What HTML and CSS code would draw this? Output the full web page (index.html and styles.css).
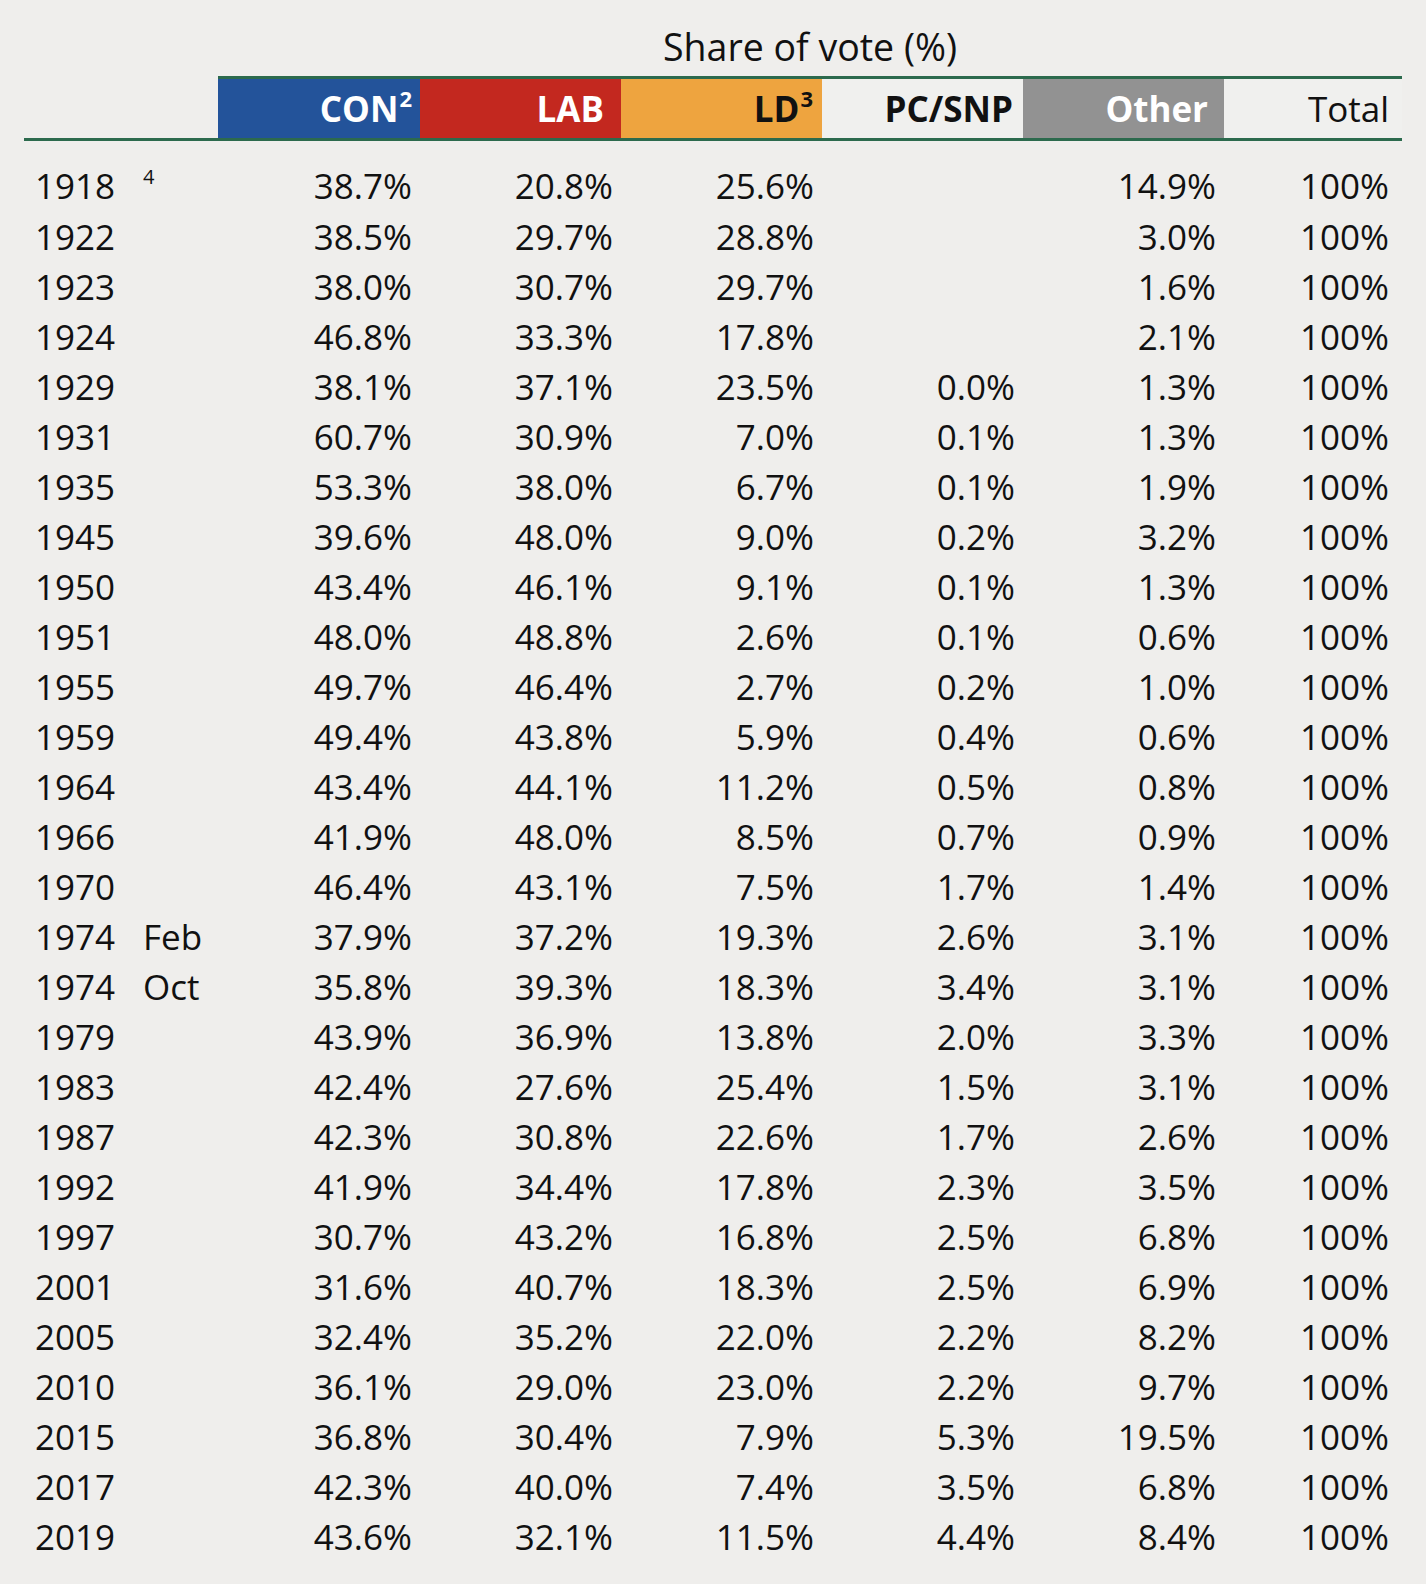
FILE: index.html
```html
<!DOCTYPE html>
<html lang="en">
<head>
<meta charset="utf-8">
<title>Share of vote</title>
<link rel="stylesheet" href="styles.css">
</head>
<body>
<div class="table">
  <div class="title-row">
    <div class="title">Share of vote (%)</div>
  </div>
  <div class="topline"></div>
  <div class="head">
    <div class="hcell blank"></div>
    <div class="hcell con">CON<sup>2</sup></div>
    <div class="hcell lab">LAB</div>
    <div class="hcell ld">LD<sup>3</sup></div>
    <div class="hcell pc">PC/SNP</div>
    <div class="hcell oth">Other</div>
    <div class="hcell tot">Total</div>
  </div>
  <div class="body">
    <div class="row first"><div class="yr"><span class="year">1918</span><span class="note">4</span></div><div class="num">38.7%</div><div class="num">20.8%</div><div class="num">25.6%</div><div class="num"></div><div class="num">14.9%</div><div class="num tnum">100%</div></div>
    <div class="row"><div class="yr"><span class="year">1922</span></div><div class="num">38.5%</div><div class="num">29.7%</div><div class="num">28.8%</div><div class="num"></div><div class="num">3.0%</div><div class="num tnum">100%</div></div>
    <div class="row"><div class="yr"><span class="year">1923</span></div><div class="num">38.0%</div><div class="num">30.7%</div><div class="num">29.7%</div><div class="num"></div><div class="num">1.6%</div><div class="num tnum">100%</div></div>
    <div class="row"><div class="yr"><span class="year">1924</span></div><div class="num">46.8%</div><div class="num">33.3%</div><div class="num">17.8%</div><div class="num"></div><div class="num">2.1%</div><div class="num tnum">100%</div></div>
    <div class="row"><div class="yr"><span class="year">1929</span></div><div class="num">38.1%</div><div class="num">37.1%</div><div class="num">23.5%</div><div class="num">0.0%</div><div class="num">1.3%</div><div class="num tnum">100%</div></div>
    <div class="row"><div class="yr"><span class="year">1931</span></div><div class="num">60.7%</div><div class="num">30.9%</div><div class="num">7.0%</div><div class="num">0.1%</div><div class="num">1.3%</div><div class="num tnum">100%</div></div>
    <div class="row"><div class="yr"><span class="year">1935</span></div><div class="num">53.3%</div><div class="num">38.0%</div><div class="num">6.7%</div><div class="num">0.1%</div><div class="num">1.9%</div><div class="num tnum">100%</div></div>
    <div class="row"><div class="yr"><span class="year">1945</span></div><div class="num">39.6%</div><div class="num">48.0%</div><div class="num">9.0%</div><div class="num">0.2%</div><div class="num">3.2%</div><div class="num tnum">100%</div></div>
    <div class="row"><div class="yr"><span class="year">1950</span></div><div class="num">43.4%</div><div class="num">46.1%</div><div class="num">9.1%</div><div class="num">0.1%</div><div class="num">1.3%</div><div class="num tnum">100%</div></div>
    <div class="row"><div class="yr"><span class="year">1951</span></div><div class="num">48.0%</div><div class="num">48.8%</div><div class="num">2.6%</div><div class="num">0.1%</div><div class="num">0.6%</div><div class="num tnum">100%</div></div>
    <div class="row"><div class="yr"><span class="year">1955</span></div><div class="num">49.7%</div><div class="num">46.4%</div><div class="num">2.7%</div><div class="num">0.2%</div><div class="num">1.0%</div><div class="num tnum">100%</div></div>
    <div class="row"><div class="yr"><span class="year">1959</span></div><div class="num">49.4%</div><div class="num">43.8%</div><div class="num">5.9%</div><div class="num">0.4%</div><div class="num">0.6%</div><div class="num tnum">100%</div></div>
    <div class="row"><div class="yr"><span class="year">1964</span></div><div class="num">43.4%</div><div class="num">44.1%</div><div class="num">11.2%</div><div class="num">0.5%</div><div class="num">0.8%</div><div class="num tnum">100%</div></div>
    <div class="row"><div class="yr"><span class="year">1966</span></div><div class="num">41.9%</div><div class="num">48.0%</div><div class="num">8.5%</div><div class="num">0.7%</div><div class="num">0.9%</div><div class="num tnum">100%</div></div>
    <div class="row"><div class="yr"><span class="year">1970</span></div><div class="num">46.4%</div><div class="num">43.1%</div><div class="num">7.5%</div><div class="num">1.7%</div><div class="num">1.4%</div><div class="num tnum">100%</div></div>
    <div class="row"><div class="yr"><span class="year">1974</span><span class="month">Feb</span></div><div class="num">37.9%</div><div class="num">37.2%</div><div class="num">19.3%</div><div class="num">2.6%</div><div class="num">3.1%</div><div class="num tnum">100%</div></div>
    <div class="row"><div class="yr"><span class="year">1974</span><span class="month">Oct</span></div><div class="num">35.8%</div><div class="num">39.3%</div><div class="num">18.3%</div><div class="num">3.4%</div><div class="num">3.1%</div><div class="num tnum">100%</div></div>
    <div class="row"><div class="yr"><span class="year">1979</span></div><div class="num">43.9%</div><div class="num">36.9%</div><div class="num">13.8%</div><div class="num">2.0%</div><div class="num">3.3%</div><div class="num tnum">100%</div></div>
    <div class="row"><div class="yr"><span class="year">1983</span></div><div class="num">42.4%</div><div class="num">27.6%</div><div class="num">25.4%</div><div class="num">1.5%</div><div class="num">3.1%</div><div class="num tnum">100%</div></div>
    <div class="row"><div class="yr"><span class="year">1987</span></div><div class="num">42.3%</div><div class="num">30.8%</div><div class="num">22.6%</div><div class="num">1.7%</div><div class="num">2.6%</div><div class="num tnum">100%</div></div>
    <div class="row"><div class="yr"><span class="year">1992</span></div><div class="num">41.9%</div><div class="num">34.4%</div><div class="num">17.8%</div><div class="num">2.3%</div><div class="num">3.5%</div><div class="num tnum">100%</div></div>
    <div class="row"><div class="yr"><span class="year">1997</span></div><div class="num">30.7%</div><div class="num">43.2%</div><div class="num">16.8%</div><div class="num">2.5%</div><div class="num">6.8%</div><div class="num tnum">100%</div></div>
    <div class="row"><div class="yr"><span class="year">2001</span></div><div class="num">31.6%</div><div class="num">40.7%</div><div class="num">18.3%</div><div class="num">2.5%</div><div class="num">6.9%</div><div class="num tnum">100%</div></div>
    <div class="row"><div class="yr"><span class="year">2005</span></div><div class="num">32.4%</div><div class="num">35.2%</div><div class="num">22.0%</div><div class="num">2.2%</div><div class="num">8.2%</div><div class="num tnum">100%</div></div>
    <div class="row"><div class="yr"><span class="year">2010</span></div><div class="num">36.1%</div><div class="num">29.0%</div><div class="num">23.0%</div><div class="num">2.2%</div><div class="num">9.7%</div><div class="num tnum">100%</div></div>
    <div class="row"><div class="yr"><span class="year">2015</span></div><div class="num">36.8%</div><div class="num">30.4%</div><div class="num">7.9%</div><div class="num">5.3%</div><div class="num">19.5%</div><div class="num tnum">100%</div></div>
    <div class="row"><div class="yr"><span class="year">2017</span></div><div class="num">42.3%</div><div class="num">40.0%</div><div class="num">7.4%</div><div class="num">3.5%</div><div class="num">6.8%</div><div class="num tnum">100%</div></div>
    <div class="row"><div class="yr"><span class="year">2019</span></div><div class="num">43.6%</div><div class="num">32.1%</div><div class="num">11.5%</div><div class="num">4.4%</div><div class="num">8.4%</div><div class="num tnum">100%</div></div>
  </div>
</div>
</body>
</html>
```

FILE: styles.css
```css
html, body {
  margin: 0;
  padding: 0;
  background: #efeeec;
}

body {
  font-family: "Open Sans", "Noto Sans", "DejaVu Sans", sans-serif;
  color: #111;
  width: 1426px;
  height: 1584px;
  overflow: hidden;
}

.table {
  margin-left: 24px;
  width: 1378px;
}

.title-row {
  height: 76px;
  padding-left: 194px;
  box-sizing: border-box;
}

.title {
  padding-top: 17px;
  line-height: 59px;
  font-size: 37.5px;
  text-align: center;
  color: #111;
}

.topline {
  margin-left: 194px;
  height: 3px;
  background: #2c6a4d;
}

.head,
.row {
  display: grid;
  grid-template-columns: 194px 202px 201px 201px 201px 201px 178px;
}

.head {
  border-bottom: 3px solid #2c6a4d;
}

.hcell {
  height: 59px;
  line-height: 59px;
  font-size: 35px;
  font-weight: 700;
  text-align: right;
  padding-right: 8px;
  box-sizing: border-box;
  white-space: nowrap;
}

.hcell sup {
  font-size: 22px;
  line-height: 0;
  vertical-align: 15px;
  margin-left: 1px;
}

.con { background: #23539a; color: #fff; }
.lab { background: #c3281f; color: #fff; padding-right: 17px; }
.ld  { background: #eea43f; color: #111; padding-right: 9px; }
.pc  { background: #f0f0ee; color: #111; padding-right: 10px; }
.oth { background: #929292; color: #fff; padding-right: 16px; }
.tot { background: #f0f0ee; color: #111; font-weight: 400; padding-right: 13px; }
.blank { background: transparent; }

.body {
  padding-top: 19px;
}

.row {
  height: 50px;
  line-height: 50px;
  font-size: 35px;
}

.row.first {
  height: 52px;
  line-height: 52px;
}

.yr {
  display: flex;
  padding-left: 11px;
}

.year {
  width: 108px;
}

.month {
  width: 60px;
}

.note {
  font-size: 20px;
  line-height: 20px;
  margin-top: 7px;
}

.num {
  text-align: right;
  padding-right: 8px;
}

.num.tnum {
  padding-right: 13px;
}
```
